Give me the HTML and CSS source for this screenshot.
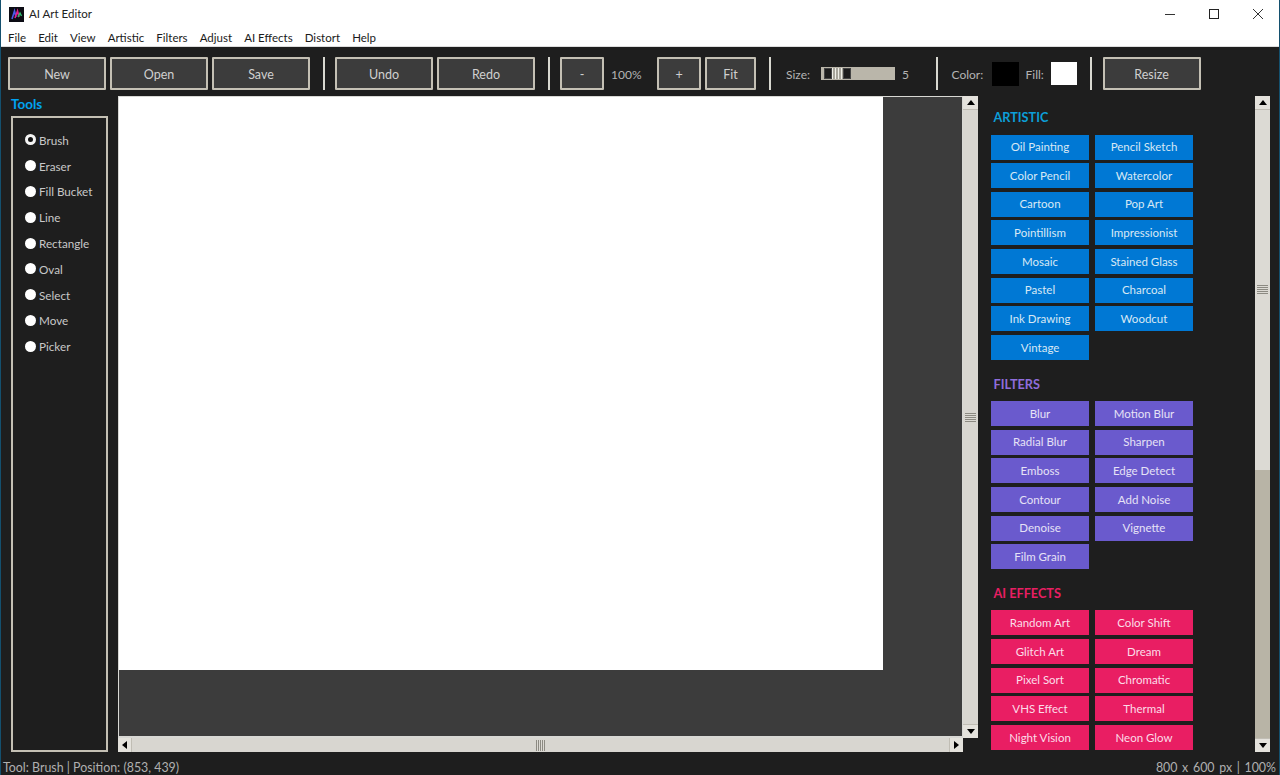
FILE: index.html
```html
<!DOCTYPE html>
<html lang="en">
<head>
<meta charset="utf-8">
<title>AI Art Editor</title>
<link rel="stylesheet" href="styles.css">
</head>
<body>
<div class="window">
  <header class="titlebar">
    <svg class="logo" width="15" height="15" viewBox="0 0 15 15"><rect width="15" height="15" fill="#0c0c14"/><path d="M3 12 L5.5 4 L7 10" stroke="#4a5ae8" stroke-width="1.6" fill="none"/><path d="M6 11 L8.5 4 L10 10" stroke="#e0208a" stroke-width="1.6" fill="none"/><path d="M9 10 L11 6 L12.5 9" stroke="#30c070" stroke-width="1.4" fill="none"/></svg>
    <span class="title">AI Art Editor</span>
    <div class="winctl">
      <svg width="12" height="12" viewBox="0 0 12 12"><path d="M1 6.5H11" stroke="#333" stroke-width="1"/></svg>
      <svg width="12" height="12" viewBox="0 0 12 12"><rect x="1.5" y="1.5" width="9" height="9" fill="none" stroke="#222" stroke-width="1"/></svg>
      <svg width="12" height="12" viewBox="0 0 12 12"><path d="M1 1L11 11M11 1L1 11" stroke="#333" stroke-width="1"/></svg>
    </div>
  </header>
  <nav class="menubar">
    <span>File</span><span>Edit</span><span>View</span><span>Artistic</span><span>Filters</span><span>Adjust</span><span>AI Effects</span><span>Distort</span><span>Help</span>
  </nav>
  <div class="toolbar">
    <button class="tb w98">New</button>
    <button class="tb w98">Open</button>
    <button class="tb w98">Save</button>
    <i class="sep"></i>
    <button class="tb w98">Undo</button>
    <button class="tb w98">Redo</button>
    <i class="sep"></i>
    <button class="tb w44">-</button>
    <span class="zoomval">100%</span>
    <button class="tb w44">+</button>
    <button class="tb w51">Fit</button>
    <i class="sep"></i>
    <span class="lbl size">Size:</span>
    <div class="slider"><div class="sthumb"><b></b><u></u><b></b></div></div>
    <span class="lbl sizeval">5</span>
    <i class="sep"></i>
    <span class="lbl color">Color:</span>
    <span class="swatch black"></span>
    <span class="lbl fill">Fill:</span>
    <span class="swatch white"></span>
    <i class="sep"></i>
    <button class="tb w98">Resize</button>
  </div>
  <main class="main">
    <aside class="tools">
      <div class="tools-title">Tools</div>
      <div class="tools-box">
        <label class="tool"><i class="radio on"></i>Brush</label>
        <label class="tool"><i class="radio"></i>Eraser</label>
        <label class="tool"><i class="radio"></i>Fill Bucket</label>
        <label class="tool"><i class="radio"></i>Line</label>
        <label class="tool"><i class="radio"></i>Rectangle</label>
        <label class="tool"><i class="radio"></i>Oval</label>
        <label class="tool"><i class="radio"></i>Select</label>
        <label class="tool"><i class="radio"></i>Move</label>
        <label class="tool"><i class="radio"></i>Picker</label>
      </div>
    </aside>
    <section class="canvas-wrap">
      <div class="canvas-row">
        <div class="canvas"><div class="paper"></div></div>
        <div class="vbar">
          <div class="sbtn"><i class="tri up"></i></div>
          <div class="vtrack"><div class="grip-v"></div></div>
          <div class="sbtn"><i class="tri down"></i></div>
        </div>
      </div>
      <div class="hbar">
        <div class="sbtn-h"><i class="tri left"></i></div>
        <div class="htrack"><div class="grip-h"></div></div>
        <div class="sbtn-h"><i class="tri right"></i></div>
      </div>
    </section>
    <section class="effects">
      <div class="effects-list">
        <h2 class="head artistic">ARTISTIC</h2>
        <div class="grid blue">
          <span>Oil Painting</span><span>Pencil Sketch</span><span>Color Pencil</span><span>Watercolor</span><span>Cartoon</span><span>Pop Art</span><span>Pointillism</span><span>Impressionist</span><span>Mosaic</span><span>Stained Glass</span><span>Pastel</span><span>Charcoal</span><span>Ink Drawing</span><span>Woodcut</span><span>Vintage</span>
        </div>
        <h2 class="head filters">FILTERS</h2>
        <div class="grid purple">
          <span>Blur</span><span>Motion Blur</span><span>Radial Blur</span><span>Sharpen</span><span>Emboss</span><span>Edge Detect</span><span>Contour</span><span>Add Noise</span><span>Denoise</span><span>Vignette</span><span>Film Grain</span>
        </div>
        <h2 class="head aifx">AI EFFECTS</h2>
        <div class="grid pink">
          <span>Random Art</span><span>Color Shift</span><span>Glitch Art</span><span>Dream</span><span>Pixel Sort</span><span>Chromatic</span><span>VHS Effect</span><span>Thermal</span><span>Night Vision</span><span>Neon Glow</span>
        </div>
      </div>
      <div class="vbar long">
        <div class="sbtn"><i class="tri up"></i></div>
        <div class="rthumb"><div class="grip-v"></div></div>
        <div class="rrest"></div>
        <div class="sbtn"><i class="tri down"></i></div>
      </div>
    </section>
  </main>
  <footer class="status">
    <span>Tool: Brush | Position: (853, 439)</span>
    <span class="status-right">800 x 600 px | 100%</span>
  </footer>
</div>
</body>
</html>
```
FILE: styles.css
```css
* { box-sizing: border-box; }
html, body { margin: 0; padding: 0; height: 100%; }
body { overflow: hidden; font-family: Lato, "Noto Sans", sans-serif; font-size: 12px; color: #c8c8c8; }
.window { width: 1280px; height: 775px; display: flex; flex-direction: column; background: #1e1e1e; border-left: 1px solid #14506e; border-right: 1px solid #14506e; }

.titlebar { height: 30px; flex: none; background: #fff; display: flex; align-items: center; padding-left: 8px; color: #222; }
.logo { margin-right: 5px; margin-top: -2px; }
.title { font-size: 11.5px; margin-top: -3px; }
.winctl { margin-left: auto; display: flex; gap: 32px; padding-right: 15px; margin-top: -3px; }

.menubar { height: 17px; flex: none; background: #fff; color: #1a1a1a; display: flex; gap: 12.1px; padding-left: 7px; line-height: 15px; font-size: 11.5px; border-bottom: 1px solid #ddd; }

.toolbar { height: 49px; flex: none; display: flex; align-items: center; padding: 4px 0 0 7px; }
.tb { height: 33px; background: #3c3c3c; color: #d0d0d0; border: 2px solid #c4c0b4; border-radius: 1px; font: inherit; font-size: 12.5px; padding: 2px 0 0; margin-right: 4px; }
.w98 { width: 98px; }
.w44 { width: 44px; }
.w51 { width: 51px; }
.sep { width: 2px; height: 33px; background: #d8d8d0; margin: 0 10.5px 0 8.5px; }
.zoomval { width: 49px; padding: 2px 0 0 3px; color: #b4b4b4; }
.lbl { color: #b4b4b4; padding-top: 2px; }
.size { margin-left: 5px; width: 35px; }
.slider { width: 74px; height: 13px; background: #bab6aa; padding: 1px 0 1px 3px; }
.sthumb { width: 27px; height: 11px; display: flex; background: #d8d6ce; }
.sthumb b { width: 8px; background: #1c1c1c; border: 1px solid #444; }
.sthumb u { flex: 1; background: repeating-linear-gradient(90deg, #efefe8 0 1px, #a8a69c 1px 3px); }
.sizeval { margin-left: 7px; width: 25px; }
.color { margin-left: 3.5px; width: 40px; }
.swatch { width: 27px; height: 24px; }
.black { background: #000; }
.white { background: #fff; width: 26px; height: 23px; margin-right: 5px; }
.fill { margin: 0 6px 0 7px; width: 19px; }

.main { height: 656px; flex: none; display: flex; }
.tools { width: 117px; flex: none; padding: 0 0 0 9px; display: flex; flex-direction: column; }
.tools-title { height: 20px; flex: none; color: #00a2f0; font-weight: 700; font-size: 13.5px; line-height: 17px; margin-left: 1px; }
.tools-box { flex: none; width: 97px; height: 636px; margin-left: 1px; border: 2px solid #c4c0b4; padding: 9px 0 0 12px; font-size: 11.7px; }
.tool { display: flex; align-items: center; height: 25.8px; color: #c8c8c8; }
.radio { width: 11px; height: 11px; border-radius: 50%; background: #fff; margin-right: 3px; margin-top: 0; }
.radio.on { background: #111; border: 3px solid #f4f4f4; }

.canvas-wrap { width: 860px; height: 656px; flex: none; display: flex; flex-direction: column; }
.canvas-row { display: flex; flex: 1; min-height: 0; }
.canvas { flex: 1; background: #3c3c3c; border: 1px solid #d8d8d4; border-width: 1px 1px 2px 1px; }
.paper { width: 764px; height: 573px; background: #fff; }
.vbar { width: 15px; flex: none; display: flex; flex-direction: column; background: #d8d6d0; }
.sbtn { height: 14px; background: #e4e2dc; display: flex; align-items: center; justify-content: center; border-bottom: 1px solid #c0bdb4; flex: none; }
.sbtn:last-child { border-bottom: 0; border-top: 1px solid #c0bdb4; }
.vtrack { flex: 1; display: flex; align-items: center; justify-content: center; }
.grip-v { width: 11px; height: 9px; background: repeating-linear-gradient(180deg, #8c8a82 0 1px, #dcdad4 1px 2px); }
.tri { width: 0; height: 0; display: block; border: 4.5px solid transparent; }
.tri.up { border-bottom: 5px solid #000; border-top: 0; }
.tri.down { border-top: 5px solid #000; border-bottom: 0; }
.tri.left { border-right: 5px solid #000; border-left: 0; }
.tri.right { border-left: 5px solid #000; border-right: 0; }
.hbar { height: 14px; flex: none; display: flex; background: #d8d6d0; margin-right: 15px; }
.sbtn-h { width: 14px; background: #e4e2dc; display: flex; align-items: center; justify-content: center; border-right: 1px solid #c0bdb4; flex: none; }
.sbtn-h:last-child { border-right: 0; border-left: 1px solid #c0bdb4; }
.htrack { flex: 1; display: flex; align-items: center; justify-content: center; }
.grip-h { width: 9px; height: 11px; background: repeating-linear-gradient(90deg, #8c8a82 0 1px, #dcdad4 1px 2px); }

.effects { flex: 1; min-width: 0; display: flex; height: 656px; padding-left: 13px; }
.effects-list { width: 264px; flex: none; padding-top: 12px; }
.vbar.long { width: 15px; }
.rthumb { height: 360px; flex: none; display: flex; align-items: flex-start; justify-content: center; padding-top: 175px; background: #dcdad4; }
.rrest { flex: 1; background: #b8b4a6; }
.head { margin: 0 0 8px 2.5px; height: 18px; line-height: 18px; font-size: 12.7px; font-weight: 700; }
.artistic { color: #0c9ed8; margin-bottom: 8.5px; }
.filters { color: #8f6ddb; }
.aifx { color: #e91e63; }
.grid { display: grid; grid-template-columns: 98px 98px; grid-auto-rows: 25px; column-gap: 6px; row-gap: 3.67px; margin-bottom: 15px; width: 202px; }
.grid span { display: flex; align-items: center; justify-content: center; font-size: 11.5px; padding-bottom: 1px; }
.blue span { background: #0078d4; color: #d8e8f4; }
.purple span { background: #6a5acd; color: #e6e2f6; }
.pink span { background: #e91e63; color: #fbdde8; }

.status { flex: 1; display: flex; justify-content: space-between; align-items: flex-start; padding: 7px 3px 0 2px; color: #b0b0b0; line-height: 18px; font-size: 12.4px; }
.status-right { word-spacing: 1.5px; }
```
